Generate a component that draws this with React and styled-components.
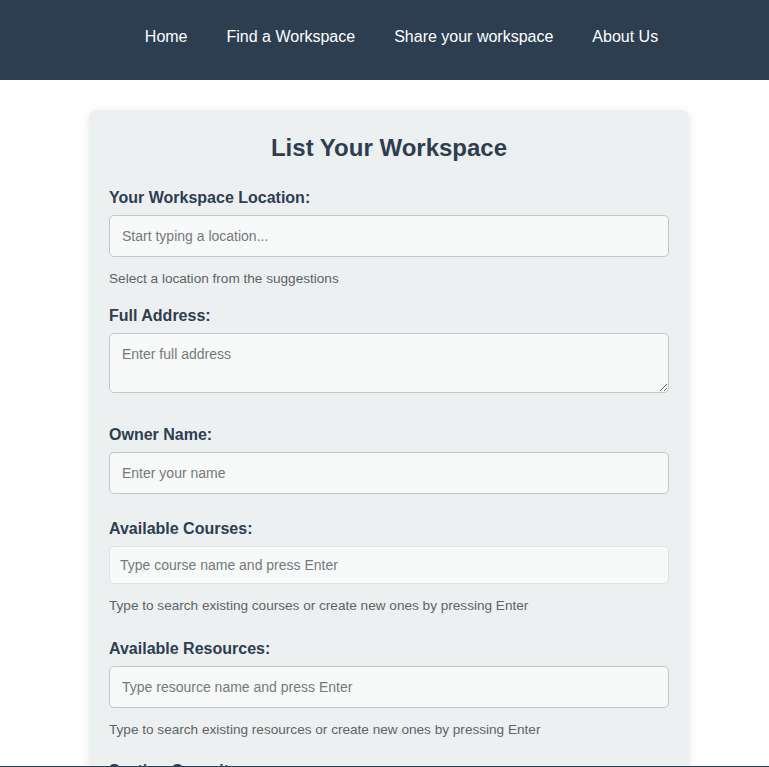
import React from "react";
import styled, { createGlobalStyle } from "styled-components";

const GlobalStyle = createGlobalStyle`
  body {
    margin: 0;
    font-family: "Liberation Sans", Arial, sans-serif;
    background: #ffffff;
    color: #2c3e50;
  }
  * {
    box-sizing: border-box;
  }
`;

const NavBar = styled.header`
  height: 80px;
  background-color: #2c3e50;
  padding-top: 27px;
`;

const NavList = styled.ul`
  list-style: none;
  margin: 0;
  padding: 0 0 0 34px;
  display: flex;
  justify-content: center;
  gap: 39px;
`;

const NavLink = styled.a`
  color: #ffffff;
  font-size: 16px;
  line-height: 20px;
  text-decoration: none;
`;

const Main = styled.main`
  padding: 30px 0 40px 9px;
`;

const FormCard = styled.div`
  width: 600px;
  margin: 0 auto;
  padding: 22px 20px 20px;
  background-color: #ecf0f1;
  border-radius: 8px;
  box-shadow: 0 2px 10px rgba(0, 0, 0, 0.1);
`;

const Title = styled.h2`
  margin: 0 0 25px;
  text-align: center;
  font-size: 24px;
  line-height: 32px;
  color: #2c3e50;
`;

const Group = styled.div`
  margin-bottom: ${(props) => props.gap || 20}px;
`;

const Label = styled.label`
  display: block;
  font-size: 16px;
  line-height: 18px;
  font-weight: bold;
  color: #2c3e50;
  margin-bottom: 8px;
`;

const Input = styled.input`
  display: block;
  width: 100%;
  height: ${(props) => (props.compact ? 38 : 42)}px;
  padding: 0 ${(props) => (props.compact ? 10 : 12)}px;
  font-family: "Liberation Sans", Arial, sans-serif;
  font-size: 14px;
  color: #2c3e50;
  background-color: #f8f9f9;
  border: 1px solid ${(props) => (props.compact ? "#dfe3e5" : "#c3c7c9")};
  border-radius: 5px;
  outline: none;

  &::placeholder {
    color: #75797c;
  }
`;

const TextArea = styled.textarea`
  display: block;
  width: 100%;
  height: 60px;
  padding: 12px;
  font-family: "Liberation Sans", Arial, sans-serif;
  font-size: 14px;
  line-height: 16px;
  color: #2c3e50;
  background-color: #f8f9f9;
  border: 1px solid #c3c7c9;
  border-radius: 5px;
  resize: vertical;
  outline: none;

  &::placeholder {
    color: #75797c;
  }
`;

const Hint = styled.small`
  display: block;
  margin-top: 15px;
  font-size: 13.6px;
  line-height: 14px;
  color: #5f6366;
`;

const FooterEdge = styled.footer`
  position: fixed;
  left: 0;
  right: 0;
  bottom: 0;
  height: 1px;
  background-color: #2c3e50;
`;

const navItems = ["Home", "Find a Workspace", "Share your workspace", "About Us"];

export default function App() {
  return (
    <>
      <GlobalStyle />
      <NavBar>
        <NavList>
          {navItems.map((item) => (
            <li key={item}>
              <NavLink href="#">{item}</NavLink>
            </li>
          ))}
        </NavList>
      </NavBar>

      <Main>
        <FormCard>
          <Title>List Your Workspace</Title>

          <Group gap={21}>
            <Label>Your Workspace Location:</Label>
            <Input placeholder="Start typing a location..." />
            <Hint>Select a location from the suggestions</Hint>
          </Group>

          <Group gap={33}>
            <Label>Full Address:</Label>
            <TextArea placeholder="Enter full address" />
          </Group>

          <Group gap={26}>
            <Label>Owner Name:</Label>
            <Input placeholder="Enter your name" />
          </Group>

          <Group gap={27}>
            <Label>Available Courses:</Label>
            <Input compact placeholder="Type course name and press Enter" />
            <Hint>Type to search existing courses or create new ones by pressing Enter</Hint>
          </Group>

          <Group gap={25}>
            <Label>Available Resources:</Label>
            <Input placeholder="Type resource name and press Enter" />
            <Hint>Type to search existing resources or create new ones by pressing Enter</Hint>
          </Group>

          <Group>
            <Label>Seating Capacity:</Label>
            <Input type="number" placeholder="Enter seating capacity" />
          </Group>
        </FormCard>
      </Main>

      <FooterEdge />
    </>
  );
}
